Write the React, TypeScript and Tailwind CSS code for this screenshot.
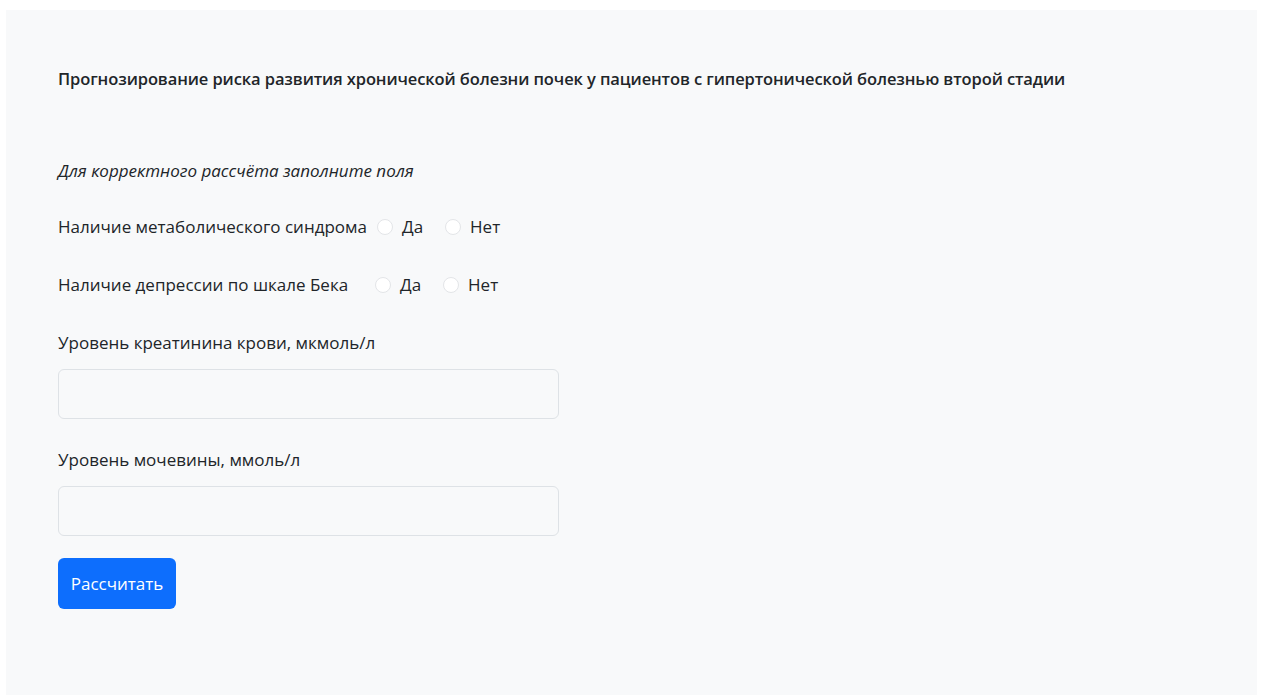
import { useState } from "react";

type RadioRowProps = {
  label: string;
  name: string;
  labelWidth: string;
};

const RadioRow = ({ label, name, labelWidth }: RadioRowProps) => {
  const [value, setValue] = useState<string | null>(null);
  return (
    <div className="flex items-center h-6">
      <span className={`${labelWidth} shrink-0`}>{label}</span>
      {["Да", "Нет"].map((opt) => (
        <label key={opt} className="flex items-center mr-[22px] cursor-pointer">
          <span
            onClick={() => setValue(opt)}
            className={
              value === opt
                ? "w-4 h-4 rounded-full border border-[#0d6efd] bg-[#0d6efd] mr-[9px]"
                : "w-4 h-4 rounded-full border border-[#e3e5e8] bg-white mr-[9px]"
            }
          />
          <span>{opt}</span>
        </label>
      ))}
      <input type="hidden" name={name} value={value ?? ""} />
    </div>
  );
};

const App = () => {
  return (
    <div
      className="min-h-screen bg-white pt-[10px] pl-[6px] pr-[4px]"
      style={{ fontFamily: '"Open Sans", "Noto Sans", sans-serif' }}
    >
      <div className="bg-[#f8f9fa] min-h-[700px] pl-[52px] pt-[57px] text-[17px] leading-6 text-[#212529]">
        <h1 className="font-semibold text-[16.5px] leading-6 tracking-[-0.1px]">
          Прогнозирование риска развития хронической болезни почек у пациентов с гипертонической болезнью второй стадии
        </h1>

        <p className="italic mt-[68px]">Для корректного рассчёта заполните поля</p>

        <div className="mt-8">
          <RadioRow label="Наличие метаболического синдрома" name="metabolic" labelWidth="w-[319px]" />
        </div>
        <div className="mt-[34px]">
          <RadioRow label="Наличие депрессии по шкале Бека" name="beck" labelWidth="w-[317px]" />
        </div>

        <div className="mt-[34px]">Уровень креатинина крови, мкмоль/л</div>
        <input className="mt-[14px] block w-[501px] h-[50px] rounded-md border border-[#dee2e6] bg-[#f8f9fa] px-3 outline-none" />

        <div className="mt-[29px]">Уровень мочевины, ммоль/л</div>
        <input className="mt-[14px] block w-[501px] h-[50px] rounded-md border border-[#dee2e6] bg-[#f8f9fa] px-3 outline-none" />

        <button className="mt-[22px] w-[118px] h-[51px] rounded-md bg-[#0d6efd] text-white">
          Рассчитать
        </button>
      </div>
    </div>
  );
};

export default App;
